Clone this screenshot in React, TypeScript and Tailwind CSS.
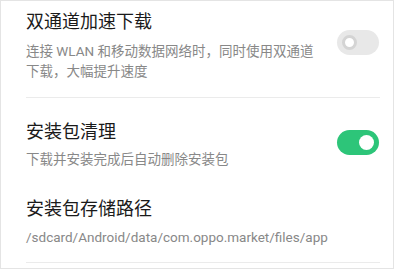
import React from 'react';

const font = { fontFamily: 'Roboto, "Noto Sans CJK SC", sans-serif' };

function Toggle({ on }: { on: boolean }) {
  return on ? (
    <div className="w-[42px] h-[25px] rounded-full bg-[#2dc579] flex items-center justify-end pr-[5px] shrink-0">
      <div className="w-[15px] h-[15px] rounded-full bg-white" />
    </div>
  ) : (
    <div className="w-[42px] h-[25px] rounded-full bg-[#e8e8e8] flex items-center pl-[5px] shrink-0">
      <div className="w-[15px] h-[15px] rounded-full bg-white border-[3px] border-[#d4d4d4]" />
    </div>
  );
}

export default function App() {
  return (
    <div className="w-[400px] h-[270px] bg-white" style={font}>
      <div className="w-[394px] h-[269px] border border-[#e4e4e4] overflow-hidden">
        {/* dual channel */}
        <div className="ml-[25px] mr-[13px] border-b border-[#ebebeb] h-[97px] flex items-start">
          <div className="flex-1 pt-[8px]">
            <div className="text-[18px] leading-[26px] text-[#1a1a1a]">双通道加速下载</div>
            <div className="mt-[6px] text-[13.5px] leading-[20px] text-[#888888] w-[295px]">
              连接 WLAN 和移动数据网络时，同时使用双通道下载，大幅提升速度
            </div>
          </div>
          <div className="mt-[29px] mr-[1px]">
            <Toggle on={false} />
          </div>
        </div>
        {/* cleanup */}
        <div className="ml-[25px] mr-[13px] h-[88px] flex items-center">
          <div className="flex-1 pt-[3px]">
            <div className="text-[18px] leading-[26px] text-[#1a1a1a]">安装包清理</div>
            <div className="mt-[4px] text-[13.5px] leading-[20px] text-[#888888]">下载并安装完成后自动删除安装包</div>
          </div>
          <div className="mr-[1px] pt-[1px]">
            <Toggle on={true} />
          </div>
        </div>
        {/* path */}
        <div className="ml-[25px] mr-[13px] border-b border-[#ebebeb] h-[77px] pt-[10px]">
          <div className="text-[18px] leading-[26px] text-[#1a1a1a]">安装包存储路径</div>
          <div className="mt-[5px] text-[13.5px] leading-[20px] text-[#888888] whitespace-nowrap">
            /sdcard/Android/data/com.oppo.market/files/app
          </div>
        </div>
      </div>
    </div>
  );
}
